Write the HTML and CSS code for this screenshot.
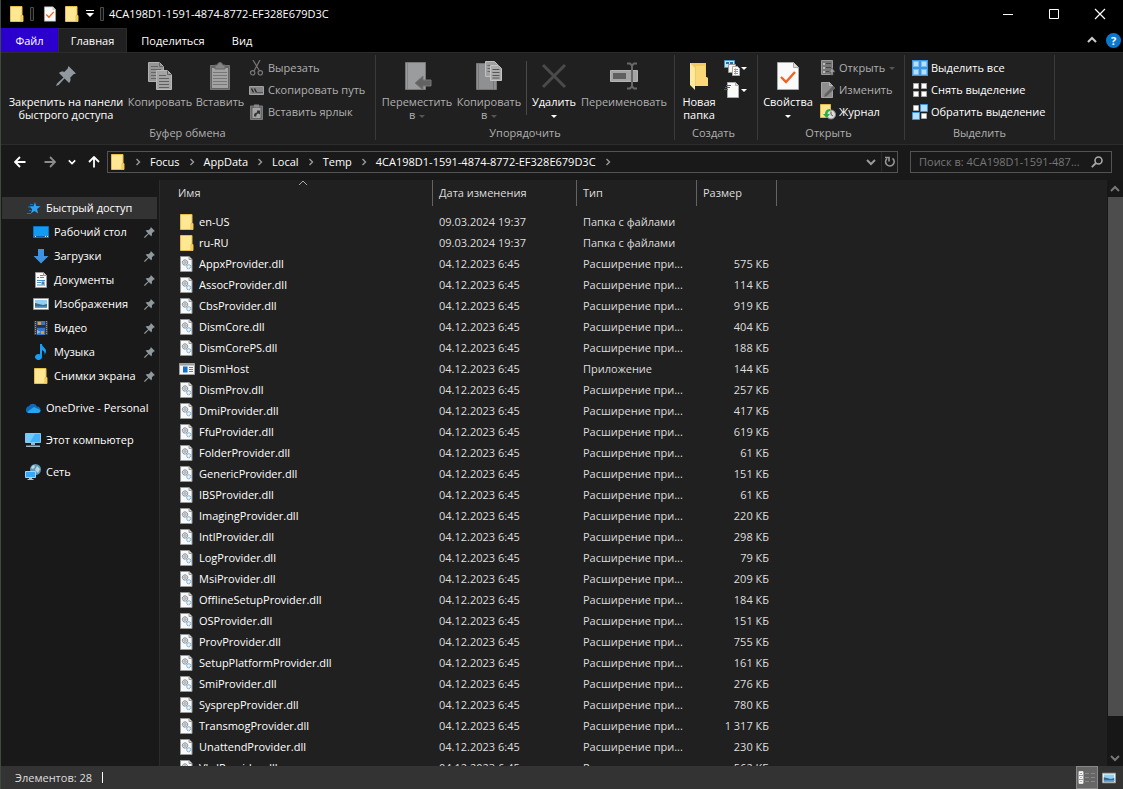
FILE: index.html
```html
<!DOCTYPE html>
<html lang="ru">
<head>
<meta charset="utf-8">
<meta name="viewport" content="width=device-width, initial-scale=1">
<title>4CA198D1-1591-4874-8772-EF328E679D3C</title>
<link rel="stylesheet" href="styles.css">
</head>
<body>
<svg class="sprite" aria-hidden="true">
  <symbol id="folder" viewBox="0 0 16 16"><path d="M1.500.5h11.500v15h-11.500z" fill="#ffe794" stroke="#e8bd45"/><path d="M12 9.500h2v6h-2z" fill="#ffdf7b" stroke="#e8bd45"/></symbol>
  <symbol id="bar" viewBox="0 0 4 14"><path d="M.5.5h3v13h-3z" fill="#111" stroke="#4b4b4b"/></symbol>
  <symbol id="doccheck" viewBox="0 0 24 30"><path d="M1.500 1.500h16l5 5v22h-21z" fill="#fafafa" stroke="#a8a8a8"/><path d="M17.500 1.500v5h5" fill="#ddd" stroke="#a8a8a8"/><path d="M5 16l5 5 9-10" fill="none" stroke="#f0621d" stroke-width="2.400"/></symbol>
  <symbol id="dll" viewBox="0 0 16 16"><path d="M1.500.5h8.500l3 3v12h-11.500z" fill="#f8f9fa" stroke="#999"/><path d="M10 .5v3h3" fill="#ddd" stroke="#999"/><circle cx="6" cy="6.500" r="2.700" fill="#d2d8dc" stroke="#737c83" stroke-dasharray="1.300 .5"/><circle cx="6" cy="6.500" r=".9" fill="#fff" stroke="#737c83" stroke-width=".6"/><circle cx="9.700" cy="10.700" r="2.100" fill="#cfe6f6" stroke="#6a9fc6" stroke-dasharray="1.200 .5"/><circle cx="9.700" cy="10.700" r=".7" fill="#fff"/></symbol>
  <symbol id="exe" viewBox="0 0 16 16"><path d="M.5 2.500h15v11H.5z" fill="#f4f4f4" stroke="#a0a0a0"/><path d="M1 3h14v1.500H1z" fill="#9a9a9a"/><path d="M4 5.500h4.500v6H4z" fill="#0f6fd1"/><path d="M10 6.500h4M10 8.500h4M10 10.500h4" stroke="#777"/></symbol>
  <symbol id="pin" viewBox="0 0 20 20"><path d="M12.500 0L20 7.500l-2.500.8-3.300 3.400c.8 2 .3 3.800-1.100 5.300L8.500 12.500 2.600 19 0 20l1-2.600 6.500-5.900L3 7c1.500-1.500 3.400-1.900 5.300-1.100l3.400-3.400z" fill="#8f999f"/></symbol>
  <symbol id="copy" viewBox="0 0 24 28"><path d="M.5.5h11l4 4v15H.5z" fill="#969696" stroke="#b0b0b0"/><path d="M11.500.5v4h4M3 4.500h7M3 7.500h10M3 10.500h10M3 13.500h10M3 16.500h10" fill="none" stroke="#666"/><path d="M8.500 8.500h11l4 4v15h-15z" fill="#a4a4a4" stroke="#b8b8b8"/><path d="M19.500 8.500v4h4M11 13.500h7M11 16.500h10M11 19.500h10M11 22.500h10M11 25.500h10" fill="none" stroke="#606060"/></symbol>
  <symbol id="paste" viewBox="0 0 20 28"><path d="M.5 3.500h19v24H.5z" fill="#656565" stroke="#777"/><path d="M2 6h16v20H2z" fill="#a3a3a3"/><path d="M3 10.500h14M3 13.500h14M3 16.500h14M3 19.500h14M3 22.500h14" stroke="#777"/><path d="M5 3h2.500a2.500 2.500 0 015 0H15v4H5z" fill="#858585" stroke="#666"/></symbol>
  <symbol id="cut" viewBox="0 0 16 16"><path d="M4 0l6.500 11M11 0L5 11" fill="none" stroke="#777" stroke-width="1.200"/><circle cx="3.700" cy="12.800" r="2.200" fill="none" stroke="#777" stroke-width="1.200"/><circle cx="11.300" cy="12.800" r="2.200" fill="none" stroke="#777" stroke-width="1.200"/></symbol>
  <symbol id="path" viewBox="0 0 16 16"><path d="M.5 4.500h14v8H.5z" fill="#858585" stroke="#a2a2a2"/><path d="M2.500 6.500l2 4M5.500 6.500l2 4" stroke="#222" stroke-width="1.300"/><path d="M8.500 10.500h5" stroke="#222" stroke-dasharray="1 1"/></symbol>
  <symbol id="pastelink" viewBox="0 0 16 16"><path d="M1.500 2h12v13.500h-12z" fill="#666" stroke="#7c7c7c"/><path d="M3.500 4h8v10h-8z" fill="#a5a5a5"/><path d="M5 .5h5v3H5z" fill="#888"/><path d="M5 12.500c0-3 1-4 3-4v-2l3 0v4l-1.200-1c-2 0-2.500 1-2.500 3z" fill="#333"/></symbol>
  <symbol id="moveto" viewBox="0 0 28 30"><path d="M2.500 1.500h20v27h-20z" fill="#9a9c9e" stroke="#777"/><path d="M4.500 2v26M19.500 18v10" stroke="#828486"/><path d="M12 22l8-7v4h8v6h-8v4z" fill="#626262" stroke="#777"/></symbol>
  <symbol id="copyto" viewBox="0 0 28 30"><path d="M1.500 2.500h20v26h-20z" fill="#8e9092" stroke="#777"/><path d="M3.500 3v25M18.500 20v8" stroke="#777"/><path d="M10.500.5h9l3 3v12h-12z" fill="#a0a0a0" stroke="#c0c0c0"/><path d="M12.500 4.500h6M12.500 7.500h6M12.500 10.500h6" stroke="#666"/><path d="M15.500 4.500h8l3 3v12h-11z" fill="#ababab" stroke="#c4c4c4"/><path d="M17.500 8.500h7M17.500 11.500h7M17.500 14.500h7M17.500 17h7" stroke="#555"/></symbol>
  <symbol id="delete" viewBox="0 0 26 26"><path d="M2 2l22 22M24 2L2 24" stroke="#4a4a4a" stroke-width="3"/></symbol>
  <symbol id="rename" viewBox="0 0 28 28"><path d="M.5 8.500h27v11H.5z" fill="#a4a4a4" stroke="#b4b4b4"/><path d="M3 11h13v6H3z" fill="#5f5f5f"/><path d="M17 1.500h3l2 2 2-2h3M22 3v22M17 26.500h3l2-2 2 2h3" fill="none" stroke="#686868" stroke-width="2"/></symbol>
  <symbol id="openfolder" viewBox="0 0 20 28"><path d="M1 1h16v14l2 1v8H6L1 22z" fill="#f2cc62"/><path d="M7 4h9l1 11 2 1v8H7z" fill="#f8d877"/><path d="M1 1l5 5v22l-5-5z" fill="#ffe8a0"/></symbol>
  <symbol id="newitem" viewBox="0 0 16 16"><path d="M.5.5h10v7H.5z" fill="#c2e3f8" stroke="#4992c5"/><path d="M2 3h3M6 3h3" stroke="#256fa5" stroke-width="2"/><path d="M4.500 4.500h7v8h-7z" fill="#f6f6f6" stroke="#999"/><path d="M8.500 6.500h5l2 2v7h-7z" fill="#fff" stroke="#aaa"/><path d="M10 9.500h4M10 11.500h4M10 13.500h4" stroke="#66a0cb"/><path d="M11.500 8.500v6" stroke="#d6926b"/></symbol>
  <symbol id="easy" viewBox="0 0 16 16"><path d="M3.500.5h8l3 3v12h-11z" fill="#fafafa" stroke="#aaa"/><path d="M11.500.5v3h3" fill="#ddd" stroke="#aaa"/><path d="M2 3.500h5M1 5.500h5M0 7.500h4" stroke="#246ba5"/></symbol>
  <symbol id="openit" viewBox="0 0 16 16"><path d="M1.500.5h11v14h-11z" fill="#777" stroke="#999"/><path d="M3 3h2v2H3zM3 7h2v2H3zM3 11h2v2H3z" fill="#bbb"/><path d="M6 3.500h5M6 7.500h5M6 11.500h3" stroke="#444"/><path d="M9 12l3-4 3 4h-2v3h-2v-3z" fill="#a0a0a0" stroke="#555" stroke-width=".6"/></symbol>
  <symbol id="edit" viewBox="0 0 16 16"><path d="M1.500.5h8l3 3v12h-11z" fill="#8e8e8e" stroke="#a4a4a4"/><path d="M9.500.5v3h3" fill="none" stroke="#bbb"/><path d="M13 4l2 2-8 8-3 1 1-3z" fill="#626262" stroke="#777" stroke-width=".6"/></symbol>
  <symbol id="history" viewBox="0 0 16 16"><path d="M.5.5h10v13H.5z" fill="#ffe590" stroke="#e2bb45"/><circle cx="11" cy="10.500" r="4.500" fill="#ddd" stroke="#888"/><path d="M11 7.500v3l2 1.500" fill="none" stroke="#555"/><path d="M10 5C6 5 5 8 5 10H3l3.500 4L10 10H7.500c0-2 .8-3 2.500-3z" fill="#2eac47"/></symbol>
  <symbol id="selall" viewBox="0 0 16 16"><path d="M0 0h16v16H0z" fill="#3b97e3"/><path d="M1.500 1.500h5v5h-5zM9.500 1.500h5v5h-5zM1.500 9.500h5v5h-5zM9.500 9.500h5v5h-5z" fill="#b9defb" stroke="#7cbdf2"/></symbol>
  <symbol id="selnone" viewBox="0 0 16 16"><path d="M1.500 1.500h5v5h-5zM9.500 1.500h5v5h-5zM1.500 9.500h5v5h-5zM9.500 9.500h5v5h-5z" fill="#fff" stroke="#a9a9a9"/></symbol>
  <symbol id="selinv" viewBox="0 0 16 16"><path d="M1.500 1.500h5v5h-5zM9.500 9.500h5v5h-5z" fill="#fff" stroke="#a9a9a9"/><path d="M8.500.5h7v7h-7zM.5 8.500h7v7h-7z" fill="#b9defb" stroke="#3b97e3"/></symbol>
  <symbol id="arrow" viewBox="0 0 12 12"><path d="M11.500 6H1.500M6 1L1 6l5 5" fill="none" stroke="currentColor" stroke-width="1.800"/></symbol>
  <symbol id="chev" viewBox="0 0 10 10"><path d="M1 3l4 4 4-4" fill="none" stroke="currentColor" stroke-width="2"/></symbol>
  <symbol id="thin" viewBox="0 0 10 10"><path d="M1 3l4 4 4-4" fill="none" stroke="currentColor"/></symbol>
  <symbol id="crumb" viewBox="0 0 10 10"><path d="M3.500 2l3 3-3 3" fill="none" stroke="currentColor" stroke-width="1.400"/></symbol>
  <symbol id="refresh" viewBox="0 0 12 12"><path d="M3 2.500a4.300 4.300 0 105.500-.2" fill="none" stroke="#969696" stroke-width="1.600"/><path d="M1 1.500h4v4" fill="none" stroke="#969696" stroke-width="1.600"/></symbol>
  <symbol id="search" viewBox="0 0 12 12"><circle cx="7.500" cy="4.500" r="3.500" fill="none" stroke="#a8a8a8" stroke-width="1.600"/><path d="M5 7L.8 11.200" stroke="#a8a8a8" stroke-width="1.800"/></symbol>
  <symbol id="star" viewBox="0 0 16 16"><path d="M9 2l1.200 4 4.300.3-3.400 2.600 1 4.600-3.600-2.500-3.700 2.500 1.400-4.300L3 6.300h4.500z" fill="#2ba1f4"/><path d="M4 4.500h3M2 7h3M3 10.500h2M1 13.500h4" stroke="#1674bd"/></symbol>
  <symbol id="desktop" viewBox="0 0 16 16"><path d="M.5 2.500h15v11H.5z" fill="#129bf3" stroke="#0873c6"/><path d="M1 12.500h14" stroke="#0a62ad"/><path d="M2 12.500h1M12 12.500h1M14 12.500h1" stroke="#fff"/></symbol>
  <symbol id="down" viewBox="0 0 16 16"><path d="M5 1h6v7h4.500L8 15.500.5 8H5z" fill="#3e92df"/></symbol>
  <symbol id="doc" viewBox="0 0 16 16"><path d="M2.500.5h8l3 3v12h-11z" fill="#fafafa" stroke="#999"/><path d="M10.500.5v3h3" fill="#ddd" stroke="#999"/><path d="M7 3.500h3M4 5.500h2M7 5.500h4M4 8.500h8M4 10.500h4M4 13h8" stroke="#3e8ed0"/><path d="M8.500 9.500h3v3h-3z" fill="#4a7fa5"/></symbol>
  <symbol id="pic" viewBox="0 0 16 16"><path d="M.5 2.500h15v11H.5z" fill="#fff" stroke="#999"/><path d="M2 4h12v8H2z" fill="#91cff5"/><path d="M2 7l4 1 4 1 4-1v4H2z" fill="#37698a"/><path d="M2 10.500h12V12H2z" fill="#5aa3cf"/></symbol>
  <symbol id="video" viewBox="0 0 16 16"><path d="M1 1h14v14H1z" fill="#3b3b3b"/><path d="M2.500 1v14M13.500 1v14" stroke="#999" stroke-dasharray="1 1"/><path d="M4 1h8v6H4zM4 8h8v7H4z" fill="#3874c9"/><path d="M5 2h3v3H5zM8 11h3v3H8z" fill="#d1a044"/><path d="M4 5h8v2H4z" fill="#1c3254"/><path d="M4 10l4 2-4 2z" fill="#79bdea"/></symbol>
  <symbol id="music" viewBox="0 0 16 16"><path d="M7 0h2c0 3 4 4 4 7 0 2-1 3-1.500 4 .5-3-.5-4-2.500-5v7a3.500 3 0 11-2-2.700z" fill="#169ff5"/></symbol>
  <symbol id="cloud" viewBox="0 0 16 16"><path d="M1 9a4 4 0 013-3 4.500 4.500 0 018 .5A3.500 3.500 0 0115.500 10a3 3 0 01-3 3H3.500A3.300 3.300 0 011 9z" fill="#0b6cbd"/><path d="M2 12l7-5 6.500 3a3 3 0 01-3 3h-9z" fill="#28a5ec"/></symbol>
  <symbol id="pc" viewBox="0 0 16 16"><path d="M.5 1.500h15v9H.5z" fill="#41b2fb" stroke="#86c7ee"/><path d="M1 2h9l-5 8H1z" fill="#72cbff"/><path d="M6 11h4v2H6zM1 13.500h14v1.500H1z" fill="#98b5c6"/></symbol>
  <symbol id="net" viewBox="0 0 16 16"><circle cx="10.500" cy="5.500" r="5.500" fill="#6297b8"/><path d="M8 1c3 0 2 3 0 4L6 4zM12 2l3 3-2 4-3-3z" fill="#b9d9dc"/><path d="M.5 7.500h10v6H.5z" fill="#35a9f7" stroke="#9bd6fb"/><path d="M4 14h3v1H4zM2.500 15h6v1h-6z" fill="#a9c1cf"/></symbol>
  <symbol id="details" viewBox="0 0 18 16"><path d="M1 1.500h4v12H1z" fill="#fff" stroke="#ddd"/><path d="M1 5.500h4M1 9.500h4" stroke="#999"/><path d="M2.500 3.500h1" stroke="#333"/><path d="M2.500 7.500h1" stroke="#1675b8"/><path d="M2.500 11.500h1" stroke="#a3400c"/><path d="M7 3.500h4M13 3.500h4M7 7.500h4M13 7.500h4M7 11.500h4M13 11.500h4" stroke="#888"/></symbol>
</svg>
<div class="window">
  <header class="titlebar">
    <svg class="i16"><use href="#folder"/></svg>
    <svg class="bar"><use href="#bar"/></svg>
    <button class="quick" aria-label="Свойства"><svg class="i16"><use href="#doccheck"/></svg></button>
    <button class="quick" aria-label="Новая папка"><svg class="i16"><use href="#folder"/></svg></button>
    <button class="quick more" aria-label="Настройка панели"><svg class="i8" viewBox="0 0 8 8"><path d="M0 .5h8" stroke="#fff"/><path d="M0 3h8L4 7z" fill="#fff"/></svg></button>
    <svg class="bar"><use href="#bar"/></svg>
    <h1 class="title">4CA198D1-1591-4874-8772-EF328E679D3C</h1>
    <div class="controls">
      <button aria-label="Свернуть"><svg class="ctl" viewBox="0 0 12 12"><path d="M1 6.500h10" stroke="#fff"/></svg></button>
      <button aria-label="Развернуть"><svg class="ctl" viewBox="0 0 12 12"><path d="M1.500 1.500h9v9h-9z" fill="none" stroke="#fff"/></svg></button>
      <button aria-label="Закрыть"><svg class="ctl" viewBox="0 0 12 12"><path d="M1 1l10 10M11 1L1 11" stroke="#fff" stroke-width="1.200"/></svg></button>
    </div>
  </header>
  <nav class="tabs">
    <button class="tab file">Файл</button>
    <button class="tab active">Главная</button>
    <button class="tab share">Поделиться</button>
    <button class="tab view">Вид</button>
    <button class="collapse" aria-label="Свернуть ленту"><svg class="i10 flip"><use href="#chev"/></svg></button>
    <button class="help" aria-label="Справка">?</button>
  </nav>
  <section class="ribbon">
    <div class="group clip">
      <div class="tools">
        <button class="big w-pin"><span class="pic"><svg class="i20"><use href="#pin"/></svg></span><span>Закрепить на панели<br>быстрого доступа</span></button>
        <button class="big w-copy dim"><span class="pic"><svg class="i28"><use href="#copy"/></svg></span><span>Копировать</span></button>
        <button class="big w-paste dim"><span class="pic"><svg class="i28"><use href="#paste"/></svg></span><span>Вставить</span></button>
        <div class="stack">
          <button class="small dim"><svg class="i16"><use href="#cut"/></svg>Вырезать</button>
          <button class="small dim"><svg class="i16"><use href="#path"/></svg>Скопировать путь</button>
          <button class="small dim"><svg class="i16"><use href="#pastelink"/></svg>Вставить ярлык</button>
        </div>
      </div>
      <div class="caption">Буфер обмена</div>
    </div>
    <div class="group organize">
      <div class="tools">
        <button class="big w-move dim"><span class="pic"><svg class="i30"><use href="#moveto"/></svg></span><span>Переместить<br>в <i class="caret"></i></span></button>
        <button class="big w-move dim"><span class="pic"><svg class="i30"><use href="#copyto"/></svg></span><span>Копировать<br>в <i class="caret"></i></span></button>
        <span class="divider"></span>
        <button class="big w-del"><span class="pic"><svg class="i24"><use href="#delete"/></svg></span><span>Удалить<br><i class="caret"></i></span></button>
        <button class="big w-ren dim"><span class="pic"><svg class="i28"><use href="#rename"/></svg></span><span>Переименовать</span></button>
      </div>
      <div class="caption">Упорядочить</div>
    </div>
    <div class="group create">
      <div class="tools">
        <button class="big w-new"><span class="pic"><svg class="i28"><use href="#openfolder"/></svg></span><span>Новая<br>папка</span></button>
        <div class="stack">
          <button class="small tight" aria-label="Создать элемент"><svg class="i16"><use href="#newitem"/></svg><i class="caret"></i></button>
          <button class="small tight" aria-label="Простой доступ"><svg class="i16"><use href="#easy"/></svg><i class="caret"></i></button>
        </div>
      </div>
      <div class="caption">Создать</div>
    </div>
    <div class="group open">
      <div class="tools">
        <button class="big w-prop"><span class="pic"><svg class="i30"><use href="#doccheck"/></svg></span><span>Свойства<br><i class="caret"></i></span></button>
        <div class="stack">
          <button class="small dim"><svg class="i16"><use href="#openit"/></svg>Открыть <i class="caret"></i></button>
          <button class="small dim"><svg class="i16"><use href="#edit"/></svg>Изменить</button>
          <button class="small"><svg class="i16"><use href="#history"/></svg>Журнал</button>
        </div>
      </div>
      <div class="caption">Открыть</div>
    </div>
    <div class="group select">
      <div class="tools">
        <div class="stack">
          <button class="small"><svg class="i16"><use href="#selall"/></svg>Выделить все</button>
          <button class="small"><svg class="i16"><use href="#selnone"/></svg>Снять выделение</button>
          <button class="small"><svg class="i16"><use href="#selinv"/></svg>Обратить выделение</button>
        </div>
      </div>
      <div class="caption">Выделить</div>
    </div>
  </section>
  <div class="navbar">
    <div class="arrows">
      <button aria-label="Назад"><svg class="i12"><use href="#arrow"/></svg></button>
      <button class="off" aria-label="Вперёд"><svg class="i12 flip"><use href="#arrow"/></svg></button>
      <button aria-label="Последние расположения"><svg class="i8"><use href="#chev"/></svg></button>
      <button aria-label="Вверх"><svg class="i12 up"><use href="#arrow"/></svg></button>
    </div>
    <div class="address">
      <svg class="i16"><use href="#folder"/></svg>
      <svg class="sep"><use href="#crumb"/></svg><a href="#">Focus</a>
      <svg class="sep"><use href="#crumb"/></svg><a href="#">AppData</a>
      <svg class="sep"><use href="#crumb"/></svg><a href="#">Local</a>
      <svg class="sep"><use href="#crumb"/></svg><a href="#">Temp</a>
      <svg class="sep"><use href="#crumb"/></svg><a href="#">4CA198D1-1591-4874-8772-EF328E679D3C</a>
      <svg class="sep"><use href="#crumb"/></svg>
      <button class="history" aria-label="История"><svg class="i10"><use href="#chev"/></svg></button>
      <button class="reload" aria-label="Обновить"><svg class="i12"><use href="#refresh"/></svg></button>
    </div>
    <div class="search">
      <input type="text" aria-label="Поиск" placeholder="Поиск в: 4CA198D1-1591-487...">
      <svg class="i12"><use href="#search"/></svg>
    </div>
  </div>
  <main class="content">
    <nav class="sidebar">
      <a href="#" class="item current"><svg class="i16"><use href="#star"/></svg>Быстрый доступ</a>
      <a href="#" class="item sub"><svg class="i16"><use href="#desktop"/></svg>Рабочий стол<svg class="pin"><use href="#pin"/></svg></a>
      <a href="#" class="item sub"><svg class="i16"><use href="#down"/></svg>Загрузки<svg class="pin"><use href="#pin"/></svg></a>
      <a href="#" class="item sub"><svg class="i16"><use href="#doc"/></svg>Документы<svg class="pin"><use href="#pin"/></svg></a>
      <a href="#" class="item sub"><svg class="i16"><use href="#pic"/></svg>Изображения<svg class="pin"><use href="#pin"/></svg></a>
      <a href="#" class="item sub"><svg class="i16"><use href="#video"/></svg>Видео<svg class="pin"><use href="#pin"/></svg></a>
      <a href="#" class="item sub"><svg class="i16"><use href="#music"/></svg>Музыка<svg class="pin"><use href="#pin"/></svg></a>
      <a href="#" class="item sub"><svg class="i16"><use href="#folder"/></svg>Снимки экрана<svg class="pin"><use href="#pin"/></svg></a>
      <a href="#" class="item root"><svg class="i16"><use href="#cloud"/></svg>OneDrive - Personal</a>
      <a href="#" class="item root"><svg class="i16"><use href="#pc"/></svg>Этот компьютер</a>
      <a href="#" class="item root"><svg class="i16"><use href="#net"/></svg>Сеть</a>
    </nav>
    <div class="files">
      <svg class="sort i10"><use href="#thin"/></svg>
      <table>
        <colgroup><col class="c-name"><col class="c-date"><col class="c-type"><col class="c-size"></colgroup>
        <thead><tr><th>Имя</th><th>Дата изменения</th><th>Тип</th><th>Размер</th></tr></thead>
        <tbody>
          <tr><td><svg class="i16"><use href="#folder"/></svg>en-US</td><td>09.03.2024 19:37</td><td>Папка с файлами</td><td></td></tr>
          <tr><td><svg class="i16"><use href="#folder"/></svg>ru-RU</td><td>09.03.2024 19:37</td><td>Папка с файлами</td><td></td></tr>
          <tr><td><svg class="i16"><use href="#dll"/></svg>AppxProvider.dll</td><td>04.12.2023 6:45</td><td>Расширение при...</td><td>575 КБ</td></tr>
          <tr><td><svg class="i16"><use href="#dll"/></svg>AssocProvider.dll</td><td>04.12.2023 6:45</td><td>Расширение при...</td><td>114 КБ</td></tr>
          <tr><td><svg class="i16"><use href="#dll"/></svg>CbsProvider.dll</td><td>04.12.2023 6:45</td><td>Расширение при...</td><td>919 КБ</td></tr>
          <tr><td><svg class="i16"><use href="#dll"/></svg>DismCore.dll</td><td>04.12.2023 6:45</td><td>Расширение при...</td><td>404 КБ</td></tr>
          <tr><td><svg class="i16"><use href="#dll"/></svg>DismCorePS.dll</td><td>04.12.2023 6:45</td><td>Расширение при...</td><td>188 КБ</td></tr>
          <tr><td><svg class="i16"><use href="#exe"/></svg>DismHost</td><td>04.12.2023 6:45</td><td>Приложение</td><td>144 КБ</td></tr>
          <tr><td><svg class="i16"><use href="#dll"/></svg>DismProv.dll</td><td>04.12.2023 6:45</td><td>Расширение при...</td><td>257 КБ</td></tr>
          <tr><td><svg class="i16"><use href="#dll"/></svg>DmiProvider.dll</td><td>04.12.2023 6:45</td><td>Расширение при...</td><td>417 КБ</td></tr>
          <tr><td><svg class="i16"><use href="#dll"/></svg>FfuProvider.dll</td><td>04.12.2023 6:45</td><td>Расширение при...</td><td>619 КБ</td></tr>
          <tr><td><svg class="i16"><use href="#dll"/></svg>FolderProvider.dll</td><td>04.12.2023 6:45</td><td>Расширение при...</td><td>61 КБ</td></tr>
          <tr><td><svg class="i16"><use href="#dll"/></svg>GenericProvider.dll</td><td>04.12.2023 6:45</td><td>Расширение при...</td><td>151 КБ</td></tr>
          <tr><td><svg class="i16"><use href="#dll"/></svg>IBSProvider.dll</td><td>04.12.2023 6:45</td><td>Расширение при...</td><td>61 КБ</td></tr>
          <tr><td><svg class="i16"><use href="#dll"/></svg>ImagingProvider.dll</td><td>04.12.2023 6:45</td><td>Расширение при...</td><td>220 КБ</td></tr>
          <tr><td><svg class="i16"><use href="#dll"/></svg>IntlProvider.dll</td><td>04.12.2023 6:45</td><td>Расширение при...</td><td>298 КБ</td></tr>
          <tr><td><svg class="i16"><use href="#dll"/></svg>LogProvider.dll</td><td>04.12.2023 6:45</td><td>Расширение при...</td><td>79 КБ</td></tr>
          <tr><td><svg class="i16"><use href="#dll"/></svg>MsiProvider.dll</td><td>04.12.2023 6:45</td><td>Расширение при...</td><td>209 КБ</td></tr>
          <tr><td><svg class="i16"><use href="#dll"/></svg>OfflineSetupProvider.dll</td><td>04.12.2023 6:45</td><td>Расширение при...</td><td>184 КБ</td></tr>
          <tr><td><svg class="i16"><use href="#dll"/></svg>OSProvider.dll</td><td>04.12.2023 6:45</td><td>Расширение при...</td><td>151 КБ</td></tr>
          <tr><td><svg class="i16"><use href="#dll"/></svg>ProvProvider.dll</td><td>04.12.2023 6:45</td><td>Расширение при...</td><td>755 КБ</td></tr>
          <tr><td><svg class="i16"><use href="#dll"/></svg>SetupPlatformProvider.dll</td><td>04.12.2023 6:45</td><td>Расширение при...</td><td>161 КБ</td></tr>
          <tr><td><svg class="i16"><use href="#dll"/></svg>SmiProvider.dll</td><td>04.12.2023 6:45</td><td>Расширение при...</td><td>276 КБ</td></tr>
          <tr><td><svg class="i16"><use href="#dll"/></svg>SysprepProvider.dll</td><td>04.12.2023 6:45</td><td>Расширение при...</td><td>780 КБ</td></tr>
          <tr><td><svg class="i16"><use href="#dll"/></svg>TransmogProvider.dll</td><td>04.12.2023 6:45</td><td>Расширение при...</td><td>1 317 КБ</td></tr>
          <tr><td><svg class="i16"><use href="#dll"/></svg>UnattendProvider.dll</td><td>04.12.2023 6:45</td><td>Расширение при...</td><td>230 КБ</td></tr>
          <tr><td><svg class="i16"><use href="#dll"/></svg>VhdProvider.dll</td><td>04.12.2023 6:45</td><td>Расширение при...</td><td>562 КБ</td></tr>
        </tbody>
      </table>
    </div>
    <div class="scrollbar">
      <button aria-label="Вверх"><svg class="i10 flip"><use href="#chev"/></svg></button>
      <div class="track"><div class="thumb"></div></div>
      <button aria-label="Вниз"><svg class="i10"><use href="#chev"/></svg></button>
    </div>
  </main>
  <footer class="status">
    <span class="count">Элементов: 28</span>
    <div class="views">
      <button class="on" aria-label="Таблица"><svg class="det"><use href="#details"/></svg></button>
      <button aria-label="Крупные значки"><svg class="i14"><use href="#pic"/></svg></button>
    </div>
  </footer>
</div>
</body>
</html>
```
FILE: styles.css
```css
* { box-sizing: border-box; }
body { margin: 0; background: #000; color: #fff; font-family: "Open Sans", "Noto Sans", sans-serif; font-size: 11px; line-height: 16px; }
button, input { font: inherit; color: inherit; background: none; border: 0; padding: 0; margin: 0; }
a { color: inherit; text-decoration: none; }
svg { display: block; flex: none; }
.sprite { position: absolute; width: 0; height: 0; }
.i8 { width: 8px; height: 8px; }
.i10 { width: 10px; height: 10px; }
.i12 { width: 12px; height: 12px; }
.i14 { width: 14px; height: 14px; }
.i16 { width: 16px; height: 16px; }
.i20 { width: 20px; height: 20px; }
.i24 { width: 26px; height: 26px; }
.i28 { width: 28px; height: 28px; }
.i30 { width: 30px; height: 30px; }
.flip { transform: rotate(180deg); }
.up { transform: rotate(90deg); }

.window { display: flex; flex-direction: column; height: 100vh; border-left: 1px solid #3c4a40; background: #191919; overflow: hidden; }

.titlebar { display: flex; align-items: center; height: 28px; flex: none; padding-left: 8px; background: #000; }
.bar { width: 4px; height: 14px; margin: 0 5px; }
.quick { padding: 0 3px; }
.more { padding-right: 1px; }
.title { margin: 0; font-size: 11px; font-weight: 400; }
.controls { display: flex; margin-left: auto; }
.controls button { display: grid; place-items: center; width: 46px; height: 28px; }
.ctl { width: 12px; height: 12px; }

.tabs { display: flex; align-items: stretch; height: 24px; flex: none; background: #000; }
.tab { padding: 1px 0 0; }
.file { width: 57px; background: #2b00cf; }
.active { width: 69px; padding: 0; background: #202020; border: 1px solid #2c2c2c; border-bottom: 0; }
.share { width: 92px; }
.view { width: 46px; }
.collapse { margin-left: auto; color: #ccc; display: grid; place-items: center; width: 20px; }
.help { align-self: center; width: 15px; height: 15px; margin: 0 2px 0 4px; border-radius: 50%; background: #0b78d0; font-weight: 700; line-height: 15px; }

.ribbon { display: flex; height: 93px; flex: none; background: #202020; border-top: 1px solid #2c2c2c; border-bottom: 1px solid #2c2c2c; }
.group { display: flex; flex-direction: column; margin: 2px 0 4px; border-right: 1px solid #3a3a3a; padding-top: 2px; }
.clip { width: 375px; padding-left: 4px; }
.organize { width: 299px; padding-left: 5px; }
.create { width: 83px; }
.open { width: 147px; }
.select { width: 150px; padding-left: 5px; }
.tools { display: flex; height: 71px; }
.caption { color: #b0b0b0; text-align: center; line-height: 14px; padding-right: 5px; }
.big { display: flex; flex-direction: column; justify-content: flex-start; white-space: nowrap; text-align: center; line-height: 13px; }
.pic { display: grid; place-items: center; height: 38px; }
.w-pin { width: 122px; }
.w-copy { width: 66px; }
.w-paste { width: 54px; }
.w-move { width: 72px; }
.w-del { width: 52px; }
.w-ren { width: 88px; }
.w-new { width: 48px; }
.w-prop { width: 60px; }
.big { align-items: center; }
.dim { color: #b0b0b0; }
.stack { display: flex; flex-direction: column; align-items: flex-start; }
.small { display: flex; align-items: center; gap: 3px; height: 22px; padding: 0 2px; white-space: nowrap; }
.tight { gap: 1px; padding: 0 1px; }
.caret { display: inline-block; border: 3px solid transparent; border-top-color: #fff; border-bottom: 0; vertical-align: middle; }
.dim .caret { border-top-color: #555; margin-left: 1px; }
.divider { width: 1px; margin: 4px 1px 11px; background: #4a4a4a; }

.navbar { display: flex; align-items: center; height: 35px; flex: none; padding: 0 11px 2px 13px; }
.arrows { display: flex; align-items: center; gap: 12px; width: 93px; }
.arrows .off { color: #8c8c8c; margin-left: 6px; }
.address { display: flex; align-items: center; flex: 1; height: 22px; border: 1px solid #535353; padding-left: 2px; margin-right: 12px; }
.sep { width: 10px; height: 10px; margin: 0 7px; color: #999; }
.history { margin-left: auto; color: #999; width: 20px; display: grid; place-items: center; }
.reload { display: grid; place-items: center; width: 16px; height: 20px; border-left: 1px solid #2a2a2a; }
.search { display: flex; align-items: center; width: 202px; height: 22px; border: 1px solid #535353; padding: 0 8px; }
.search input { flex: 1; min-width: 0; outline: 0; }
.search input::placeholder { color: #777; opacity: 1; }

.content { display: flex; flex: 1; min-height: 0; }
.sidebar { width: 159px; flex: none; padding: 17px 2px 0 1px; white-space: nowrap; border-right: 1px solid #2b2b2b; }
.item { display: flex; align-items: center; height: 24px; gap: 5px; padding-left: 23px; }
.current { height: 22px; margin-bottom: 1px; background: #333; padding-left: 24px; gap: 4px; }
.sub { padding-left: 31px; }
.pin { width: 11px; height: 11px; margin: 0 2px 0 auto; }
.root { margin-top: 8px; }

.files { flex: 1; min-width: 0; background: #202020; overflow: hidden; position: relative; }
.sort { position: absolute; left: 138px; top: -2px; transform: rotate(180deg); color: #aaa; }
table { table-layout: fixed; width: 617px; border-collapse: separate; border-spacing: 0; }
.c-name { width: 273px; }
.c-date { width: 144px; }
.c-type { width: 120px; }
.c-size { width: 80px; }
th { height: 26px; padding: 0 6px; text-align: left; font-weight: 400; color: #dedede; border-right: 1px solid #636363; }
th:first-child { padding-left: 18px; }
thead::after { content: ""; display: block; height: 5px; }
td { height: 21px; padding: 0 6px; color: #dedede; white-space: nowrap; }
td:first-child { display: flex; align-items: center; gap: 4px; padding-left: 19px; color: #fff; }
td:last-child { text-align: right; padding-right: 8px; }

.scrollbar { display: flex; flex-direction: column; width: 16px; flex: none; background: #171717; }
.scrollbar button { display: grid; place-items: center; height: 17px; color: #777; }
.track { flex: 1; }
.thumb { height: 94%; margin-left: 1px; background: #4d4d4d; }

.status { display: flex; align-items: center; height: 23px; flex: none; background: #333; padding-left: 14px; color: #dedede; }
.count { padding-right: 10px; border-right: 1px solid #fff; line-height: 11px; }
.views { display: flex; margin-left: auto; padding-right: 3px; }
.views button { display: grid; place-items: center; width: 22px; height: 23px; }
.views .on { background: #666; border: 1px solid #888; }
.det { width: 18px; height: 16px; }
```
